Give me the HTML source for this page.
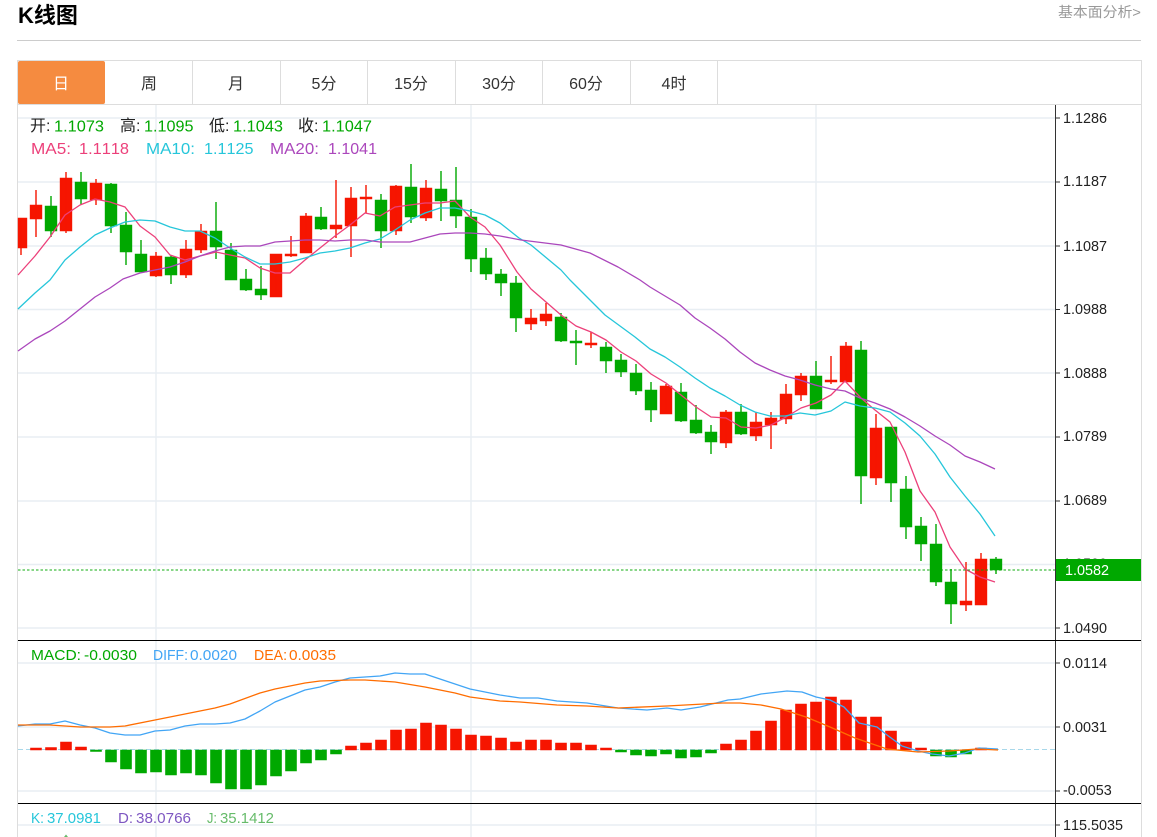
<!DOCTYPE html>
<html lang="zh"><head><meta charset="utf-8"><title>K线图</title>
<style>
html,body{margin:0;padding:0;background:#fff;width:1157px;height:837px;overflow:hidden}
svg{position:absolute;left:0;top:0;display:block}
text{font-family:"Liberation Sans","Noto Sans CJK SC",sans-serif;font-kerning:none}
</style></head><body>
<svg width="1157" height="837" viewBox="0 0 1157 837" xmlns="http://www.w3.org/2000/svg">
<text x="18" y="23" font-size="22" font-weight="700" fill="#000">K线图</text>
<text x="1058" y="17" font-size="14" fill="#999" textLength="83" lengthAdjust="spacingAndGlyphs">基本面分析&gt;</text>
<rect x="17" y="40" width="1124" height="1" fill="#ccc"/>
<!-- tabs -->
<path d="M17.5 837V60.5H1141.5V837M18 104.5H1141" fill="none" stroke="#ddd"/>
<path d="M192.5 61V104M280.5 61V104M367.5 61V104M455.5 61V104M542.5 61V104M630.5 61V104M717.5 61V104" stroke="#ddd"/>
<rect x="18" y="61" width="87" height="43" rx="2" fill="#f58b40"/>
<g font-size="16" text-anchor="middle" fill="#333">
<text x="61" y="89" fill="#fff">日</text><text x="149" y="89">周</text><text x="236" y="89">月</text><text x="324" y="89">5分</text><text x="411" y="89">15分</text><text x="499" y="89">30分</text><text x="586" y="89">60分</text><text x="674" y="89">4时</text>
</g>
<!-- grid -->
<path d="M18 118H1055M18 182H1055M18 246H1055M18 309.500H1055M18 373H1055M18 437H1055M18 501H1055M18 564.500H1055M18 628H1055M18 663H1055M18 727H1055M18 791H1055M18 825H1055M156 105V837M471 105V837M816 105V837" stroke="#e8eef3" stroke-width="1.4" fill="none"/>
<!-- axis -->
<path d="M1055.500 105V837M1055 118H1060M1055 182H1060M1055 246H1060M1055 309.500H1060M1055 373H1060M1055 437H1060M1055 501H1060M1055 570H1060M1055 628H1060M1055 663H1060M1055 727H1060M1055 791H1060M1055 825H1060" stroke="#333" fill="none"/>
<path d="M18 640.500H1141M18 803.500H1141" stroke="#000"/>
<g font-size="14.400" fill="#222">
<text x="1063" y="123">1.1286</text><text x="1063" y="186">1.1187</text><text x="1063" y="251">1.1087</text><text x="1063" y="314">1.0988</text><text x="1063" y="378">1.0888</text><text x="1063" y="441">1.0789</text><text x="1063" y="505">1.0689</text><text x="1063" y="568.500">1.0590</text><text x="1063" y="633">1.0490</text><text x="1063" y="668">0.0114</text><text x="1063" y="732">0.0031</text><text x="1063" y="795">-0.0053</text><text x="1063" y="830">115.5035</text>
</g>
<!-- green candles -->
<g fill="#00a800" stroke="#00a800" stroke-width="1.400">
<path d="M51 196V237M45.500 206.500h11v24h-11zM81 172V205M75.500 182.500h11v16h-11zM111 183V233M105.500 184.500h11v41h-11zM126 212V265M120.500 225.500h11v26h-11zM141 240V272M135.500 254.500h11v17h-11zM171 255V284M165.500 257.500h11v17h-11zM216 202V259M210.500 231.500h11v15h-11zM231 243V280M225.500 250.500h11v29h-11zM246 269V291M240.500 279.500h11v10h-11zM261 266V300M255.500 289.500h11v5h-11zM321 207V230M315.500 217.500h11v11h-11zM381 194V248M375.500 200.500h11v30h-11zM411 164V223M405.500 187.500h11v29h-11zM441 171V221M435.500 189.500h11v11h-11zM456 167V228M450.500 200.500h11v15h-11zM471 209V272M465.500 217.500h11v41h-11zM486 248V280M480.500 258.500h11v15h-11zM501 269V296M495.500 274.500h11v8h-11zM516 276V332M510.500 283.500h11v34h-11zM561 313V342M555.500 317.500h11v23h-11zM576 330V365M570.500 341.500h11v1h-11zM606 342V373M600.500 347.500h11v13h-11zM621 354V377M615.500 360.500h11v11h-11zM636 364V395M630.500 373.500h11v17h-11zM651 382V422M645.500 390.500h11v19h-11zM681 383V422M675.500 392.500h11v28h-11zM696 405V434M690.500 420.500h11v12h-11zM711 425V454M705.500 432.500h11v9h-11zM741 404V435M735.500 412.500h11v21h-11zM816 361V409M810.500 376.500h11v32h-11zM861 341V504M855.500 350.500h11v125h-11zM891 427V502M885.500 427.500h11v55h-11zM906 476V539M900.500 489.500h11v37h-11zM921 517V561M915.500 526.500h11v17h-11zM936 524V586M930.500 544.500h11v37h-11zM951 569V624M945.500 582.500h11v21h-11zM996 557V574M990.500 559.500h11v10h-11z"/>
</g>
<!-- red candles -->
<g fill="#f61500" stroke="#f61500" stroke-width="1.400">
<path d="M21 218V255M18.500 218.500h8v29h-8zM36 190V237M30.500 205.500h11v13h-11zM66 172V233M60.500 178.500h11v52h-11zM96 179V205M90.500 183.500h11v16h-11zM156 252V277M150.500 256.500h11v19h-11zM186 240V278M180.500 249.500h11v25h-11zM201 224V253M195.500 231.500h11v18h-11zM276 254V297M270.500 254.500h11v42h-11zM291 236V257M285.500 254.500h11v1h-11zM306 213V253M300.500 216.500h11v36h-11zM336 180V238M330.500 225.500h11v3h-11zM351 187V257M345.500 198.500h11v27h-11zM366 185V213M360.500 197.500h11v1h-11zM396 185V235M390.500 186.500h11v44h-11zM426 180V221M420.500 188.500h11v29h-11zM531 309V330M525.500 318.500h11v5h-11zM546 303V326M540.500 314.500h11v6h-11zM591 332V348M585.500 343.500h11v1h-11zM666 384V414M660.500 386.500h11v27h-11zM726 410V448M720.500 412.500h11v30h-11zM756 412V441M750.500 422.500h11v13h-11zM771 412V449M765.500 418.500h11v6h-11zM786 384V424M780.500 394.500h11v24h-11zM801 373V401M795.500 376.500h11v18h-11zM831 356V384M825.500 380.500h11v1h-11zM846 342V382M840.500 346.500h11v35h-11zM876 414V485M870.500 428.500h11v49h-11zM966 562V611M960.500 601.500h11v3h-11zM981 553V605M975.500 559.500h11v45h-11z"/>
</g>
<!-- MA lines -->
<g fill="none" stroke-width="1.300" stroke-linejoin="round">
<polyline stroke="#ec407a" points="18,275 35,256 50,237 65,215 80,205 95,199 110,202 125,207 140,226 155,237 170,255 185,260 200,256 216,252 230,255 245,258 260,268 275,273 290,273 305,260 320,248 335,236 350,225 365,213 380,216 395,207 410,205 425,203 440,203 455,201 470,217 485,227 500,245 517,272 531,289 546,302 561,315 576,326 591,332 606,340 621,352 636,361 651,374 666,383 681,395 696,407 711,417 726,418 741,427 756,428 771,425 786,417 801,408 816,403 831,395 845,381 861,398 875,410 890,422 905,452 920,491 935,512 950,547 965,569 980,577 995,582"/>
<polyline stroke="#26c6da" points="18,309 35,293 50,280 65,260 80,247 95,235 110,228 125,222 140,220 155,221 170,227 185,231 200,231 215,238 230,248 245,257 260,264 275,264 290,262 305,258 320,253 335,251 350,248 365,243 380,239 395,230 410,220 425,213 440,208 455,208 470,211 485,215 500,223 519,238 531,245 561,270 570,280 605,315 620,326 635,337 650,349 665,357 680,367 695,378 710,388 725,396 740,405 755,412 770,416 785,416 800,413 815,415 831,411 845,402 860,406 875,408 890,412 905,423 920,436 935,454 950,477 965,496 980,514 995,536"/>
<polyline stroke="#ab47bc" points="18,351 35,339 50,331 65,321 80,309 95,297 110,288 123,279 140,273 155,270 170,267 185,262 200,256 215,251 230,247 245,246 260,246 275,242 290,241 305,240 320,240 335,241 350,240 365,240 380,242 395,242 410,242 425,238 440,234 455,233 470,233 485,234 500,236 521,240 561,245 590,253 618,267 640,280 650,287 665,296 680,305 695,318 710,328 725,339 740,352 755,363 770,370 785,376 800,380 815,385 831,389 845,391 860,398 875,403 890,409 905,417 920,426 935,436 950,445 965,456 980,462 995,469"/>
</g>
<!-- last price -->
<line x1="18" y1="570" x2="1055" y2="570" stroke="#00a800" stroke-opacity=".75" stroke-width="1.200" stroke-dasharray="2.500 2"/>
<rect x="1056" y="559" width="85" height="22" fill="#00a800"/>
<text x="1065" y="575" font-size="14.400" fill="#fff">1.0582</text>
<!-- legends -->
<g font-size="16">
<text x="30" y="131" fill="#222">开:</text><text x="54" y="131.500" fill="#00a800" textLength="50" lengthAdjust="spacingAndGlyphs">1.1073</text>
<text x="120" y="131" fill="#222">高:</text><text x="144" y="131.500" fill="#00a800" textLength="49.500" lengthAdjust="spacingAndGlyphs">1.1095</text>
<text x="209" y="131" fill="#222">低:</text><text x="233" y="131.500" fill="#00a800" textLength="50" lengthAdjust="spacingAndGlyphs">1.1043</text>
<text x="298" y="131" fill="#222">收:</text><text x="322" y="131.500" fill="#00a800" textLength="50" lengthAdjust="spacingAndGlyphs">1.1047</text>
<text x="31" y="154" fill="#ec407a" textLength="40" lengthAdjust="spacingAndGlyphs">MA5:</text><text x="79" y="154" fill="#ec407a" textLength="50" lengthAdjust="spacingAndGlyphs">1.1118</text>
<text x="146" y="154" fill="#26c6da" textLength="49" lengthAdjust="spacingAndGlyphs">MA10:</text><text x="204" y="154" fill="#26c6da" textLength="49.500" lengthAdjust="spacingAndGlyphs">1.1125</text>
<text x="270" y="154" fill="#ab47bc" textLength="49" lengthAdjust="spacingAndGlyphs">MA20:</text><text x="328" y="154" fill="#ab47bc" textLength="49" lengthAdjust="spacingAndGlyphs">1.1041</text>
</g>
<g font-size="15">
<text x="31" y="660" fill="#00a800" textLength="50" lengthAdjust="spacingAndGlyphs">MACD:</text><text x="84" y="660" fill="#00a800" textLength="53" lengthAdjust="spacingAndGlyphs">-0.0030</text>
<text x="153" y="660" fill="#42a5f5" textLength="35" lengthAdjust="spacingAndGlyphs">DIFF:</text><text x="190" y="660" fill="#42a5f5" textLength="47" lengthAdjust="spacingAndGlyphs">0.0020</text>
<text x="254" y="660" fill="#ff6d00" textLength="33" lengthAdjust="spacingAndGlyphs">DEA:</text><text x="289" y="660" fill="#ff6d00" textLength="47" lengthAdjust="spacingAndGlyphs">0.0035</text>
<text x="31" y="823" fill="#26c6da" textLength="13" lengthAdjust="spacingAndGlyphs">K:</text><text x="47" y="823" fill="#26c6da" textLength="54" lengthAdjust="spacingAndGlyphs">37.0981</text>
<text x="118" y="823" fill="#7e57c2" textLength="15" lengthAdjust="spacingAndGlyphs">D:</text><text x="136" y="823" fill="#7e57c2" textLength="55" lengthAdjust="spacingAndGlyphs">38.0766</text>
<text x="207" y="823" fill="#66bb6a" textLength="10" lengthAdjust="spacingAndGlyphs">J:</text><text x="220" y="823" fill="#66bb6a" textLength="54" lengthAdjust="spacingAndGlyphs">35.1412</text>
</g>
<!-- MACD bars -->
<line x1="18" y1="749.500" x2="1055" y2="749.500" stroke="#a8d8ea" stroke-width="1" stroke-dasharray="5 3"/>
<path fill="#f61500" stroke="#f61500" stroke-width=".6" d="M30.500 748h11v2h-11zM45.500 747.500h11v2.500h-11zM60.500 742h11v8h-11zM75.500 747h11v3h-11zM345.500 746h11v4h-11zM360.500 743h11v7h-11zM375.500 740h11v10h-11zM390.500 730h11v20h-11zM405.500 729h11v21h-11zM420.500 723h11v27h-11zM435.500 725h11v25h-11zM450.500 729h11v21h-11zM465.500 735h11v15h-11zM480.500 736h11v14h-11zM495.500 738h11v12h-11zM510.500 742h11v8h-11zM525.500 740h11v10h-11zM540.500 740h11v10h-11zM555.500 743h11v7h-11zM570.500 743h11v7h-11zM585.500 745h11v5h-11zM600.500 748h11v2h-11zM720.500 744h11v6h-11zM735.500 740h11v10h-11zM750.500 731h11v19h-11zM765.500 721h11v29h-11zM780.500 710h11v40h-11zM795.500 704h11v46h-11zM810.500 702h11v48h-11zM825.500 697h11v53h-11zM840.500 700h11v50h-11zM855.500 717h11v33h-11zM870.500 717h11v33h-11zM885.500 731h11v19h-11zM900.500 742h11v8h-11zM915.500 748h11v2h-11zM975.500 748h11v2h-11z"/>
<path fill="#00a800" stroke="#00a800" stroke-width=".6" d="M90.500 750h11v1.500h-11zM105.500 750h11v12h-11zM120.500 750h11v19h-11zM135.500 750h11v23h-11zM150.500 750h11v22h-11zM165.500 750h11v25h-11zM180.500 750h11v23h-11zM195.500 750h11v25h-11zM210.500 750h11v33h-11zM225.500 750h11v39h-11zM240.500 750h11v39h-11zM255.500 750h11v35h-11zM270.500 750h11v26h-11zM285.500 750h11v21h-11zM300.500 750h11v13h-11zM315.500 750h11v10h-11zM330.500 750h11v4h-11zM615.500 750h11v2h-11zM630.500 750h11v5h-11zM645.500 750h11v6h-11zM660.500 750h11v4h-11zM675.500 750h11v8h-11zM690.500 750h11v7h-11zM705.500 750h11v3h-11zM930.500 750h11v6h-11zM945.500 750h11v7h-11zM960.500 750h11v4h-11z"/>
<g fill="none" stroke-width="1.300" stroke-linejoin="round">
<polyline stroke="#42a5f5" points="18,726 35,724 50,724 65,721 80,725 95,728 110,733 125,735 140,735 155,731 170,730 185,726 200,724 215,724 230,723 245,719 260,711 275,702 290,696 305,690 320,687 335,682 350,678 365,677 380,676 395,673 410,674 425,674 440,679 455,684 470,689 485,692 500,695 520,698 538,698 557,701 587,703 618,708 647,710 667,708 681,710 700,707 728,700 740,699 761,694 787,691 802,692 816,697 830,700 844,707 859,723 877,727 887,735 902,746 918,751 932,754 949,756 965,753 979,748 998,749"/>
<polyline stroke="#ff6d00" points="18,725 50,725 80,727 110,727 125,726 155,720 185,714 215,708 230,704 260,693 275,689 305,683 320,681 350,680 365,680 395,682 425,687 455,693 470,697 500,701 520,702 557,705 587,706 618,708 667,706 722,703 740,703 761,705 781,709 806,717 830,727 855,738 887,749 918,752 949,751 977,749 998,750"/>
</g>
<path d="M64 837L66 834.500L68 837z" fill="#66bb6a"/>
</svg>
</body></html>
